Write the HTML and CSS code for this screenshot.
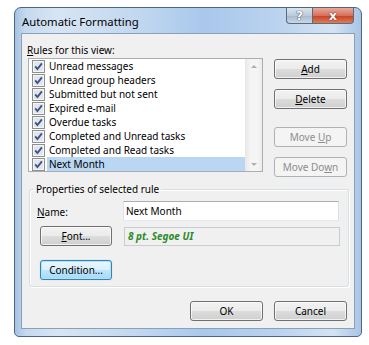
FILE: index.html
```html
<!DOCTYPE html>
<html lang="en">
<head>
    <meta charset="UTF-8">
    <title>Automatic Formatting</title>
    <link rel="stylesheet" href="styles.css">
</head>
<body>
    <svg width="0" height="0" class="defs">
        <symbol id="chk" viewBox="0 0 13 13">
            <rect x="0.5" y="0.5" width="12" height="12" fill="#f6f6f6" stroke="#8e8f8f"/>
            <rect x="2" y="2" width="9" height="9" fill="#e2e6eb"/>
            <path d="M3.2 6.4 L5.4 9 L9.9 3.4" stroke="#3c5588" stroke-width="1.9" fill="none"/>
        </symbol>
    </svg>
    <div class="window">
        <div class="titlebar">
            <span class="title">Automatic Formatting</span>
            <div class="caption-btns">
                <span class="cap-help">?</span>
                <span class="cap-close">x</span>
            </div>
        </div>
        <div class="client">
            <div class="rules">
                <div class="rules-left">
                    <div class="label"><u>R</u>ules for this view:</div>
                    <div class="listbox">
                        <div class="items">
                            <div class="item"><svg class="check"><use href="#chk"/></svg><span>Unread messages</span></div>
                            <div class="item"><svg class="check"><use href="#chk"/></svg><span>Unread group headers</span></div>
                            <div class="item"><svg class="check"><use href="#chk"/></svg><span>Submitted but not sent</span></div>
                            <div class="item"><svg class="check"><use href="#chk"/></svg><span>Expired e-mail</span></div>
                            <div class="item"><svg class="check"><use href="#chk"/></svg><span>Overdue tasks</span></div>
                            <div class="item"><svg class="check"><use href="#chk"/></svg><span>Completed and Unread tasks</span></div>
                            <div class="item"><svg class="check"><use href="#chk"/></svg><span>Completed and Read tasks</span></div>
                            <div class="item selected"><svg class="check"><use href="#chk"/></svg><span>Next Month</span></div>
                        </div>
                        <div class="scrollbar">
                            <span class="arrow up"></span>
                            <span class="arrow down"></span>
                        </div>
                    </div>
                </div>
                <div class="rules-btns">
                    <button class="btn"><u>A</u>dd</button>
                    <button class="btn"><u>D</u>elete</button>
                    <button class="btn disabled move-up">Move <u>U</u>p</button>
                    <button class="btn disabled">Move Do<u>w</u>n</button>
                </div>
            </div>
            <fieldset class="group">
                <legend>Properties of selected rule</legend>
                <div class="group-body">
                    <div class="prop-row">
                        <span class="prop-label"><u>N</u>ame:</span>
                        <div class="textbox">Next Month</div>
                    </div>
                    <div class="prop-row font-row">
                        <button class="btn small"><u>F</u>ont...</button>
                        <div class="font-preview">8 pt. Segoe UI</div>
                    </div>
                    <button class="btn small focused">Condition...</button>
                </div>
            </fieldset>
            <div class="footer">
                <button class="btn">OK</button>
                <button class="btn">Cancel</button>
            </div>
        </div>
    </div>
</body>
</html>
```

FILE: styles.css
```css
body {
    margin: 0;
    background: #fff;
    font-family: "Noto Sans", "Open Sans", sans-serif;
    font-size: 10px;
    color: #000;
}
.defs {
    position: absolute;
}
.window {
    margin: 7px 0 0 14px;
    width: 348px;
    height: 330px;
    box-sizing: border-box;
    border: 1px solid #4e6683;
    border-radius: 7px 7px 5px 5px;
    padding: 0 6px 7px 6px;
    background: linear-gradient(to right, #a6c2e2 0%, #c4d9ef 3%, #d7e5f3 12%, #c2d8ef 35%, #a9c8ec 55%, #bad2ee 75%, #d3e3f3 92%, #a9c4e4 100%);
}
.titlebar {
    height: 25px;
    display: flex;
    align-items: flex-start;
}
.title {
    margin: 6px 0 0 1px;
    font-size: 11.3px;
    line-height: 15px;
}
.caption-btns {
    margin-left: auto;
    margin-right: 1px;
    display: flex;
}
.cap-help, .cap-close {
    height: 16px;
    box-sizing: border-box;
    display: flex;
    align-items: center;
    justify-content: center;
    font-family: "DejaVu Sans", sans-serif;
    font-weight: bold;
    color: #fff;
    border: 1px solid #5d6b7d;
    border-top: none;
}
.cap-help {
    width: 26px;
    border-radius: 0 0 0 4px;
    border-right: none;
    background: linear-gradient(#dbe4ee, #bccadb 50%, #a6b8cc 51%, #c9d9ea);
    font-size: 12px;
    text-shadow: 0 0 1px #2c3c52, 0 0 1px #2c3c52;
}
.cap-close {
    width: 42px;
    border-radius: 0 0 4px 0;
    background: linear-gradient(#e9a99b, #d8705b 50%, #c74024 51%, #dd7c5d);
    font-size: 13px;
    text-shadow: 0 0 1px #5a1508, 0 0 1px #5a1508;
}
.client {
    height: 296px;
    box-sizing: border-box;
    background: #f0f0f0;
    border: 1px solid #8aa0b8;
    display: flex;
    flex-direction: column;
}
.rules {
    display: flex;
    padding: 9px 0 0 6px;
}
.rules-left {
    width: 235px;
}
.label {
    height: 15px;
    line-height: 15px;
    margin-left: -1px;
}
.listbox {
    height: 114px;
    box-sizing: border-box;
    border: 1px solid #abadb3;
    background: #fff;
    display: flex;
}
.items {
    flex: 1;
    padding-left: 3px;
}
.item {
    height: 14px;
    display: flex;
    align-items: center;
    line-height: 14px;
}
.item span {
    padding-left: 2px;
    flex: 1;
}
.item.selected span {
    background: #b9d6f3;
}
.check {
    width: 13px;
    height: 13px;
    margin-right: 2px;
}
.scrollbar {
    width: 17px;
    background: linear-gradient(to right, #eaeaea, #f5f5f5 30%, #f5f5f5 70%, #ececec);
    border-left: 1px solid #e8e8e8;
    display: flex;
    flex-direction: column;
    justify-content: space-between;
    align-items: center;
    padding: 6px 0 5px;
    box-sizing: border-box;
}
.arrow {
    width: 0;
    height: 0;
    border-left: 3px solid transparent;
    border-right: 3px solid transparent;
}
.arrow.up {
    border-bottom: 3px solid #b0b0b0;
}
.arrow.down {
    border-top: 3px solid #b0b0b0;
}
.rules-btns {
    margin-left: 11px;
    padding-top: 16px;
    display: flex;
    flex-direction: column;
    gap: 10px;
}
.btn {
    width: 73px;
    height: 20px;
    box-sizing: border-box;
    padding: 0;
    font-family: inherit;
    font-size: 10px;
    color: #000;
    border: 1px solid #707070;
    border-radius: 3px;
    background: linear-gradient(#f2f2f2, #ebebeb 49%, #dddddd 50%, #cfcfcf);
    box-shadow: inset 0 0 0 1px rgba(255, 255, 255, 0.7);
}
.btn.disabled {
    color: #8d8d8d;
    border-color: #adb2b5;
    background: #f4f4f4;
    box-shadow: none;
}
.btn.move-up {
    margin-top: 8px;
}
.btn.small {
    width: 72px;
}
.btn.focused {
    border-color: #3c7fb1;
    background: linear-gradient(#eaf6fd, #d9f0fc 49%, #bee6fd 50%, #a7d9f5);
    box-shadow: inset 0 0 0 1px #a9e4fb, 0 0 1px #7cc4ea;
}
.group {
    margin: 5px 7px 0 7px;
    padding: 0;
    border: 1px solid #d5dfe5;
    border-radius: 3px;
    box-shadow: inset 1px 1px 0 #fff, 1px 1px 0 #fff;
}
.group legend {
    margin-left: 4px;
    padding: 0 2px;
    line-height: 14px;
}
.group-body {
    padding: 5px 8px 6px 8px;
}
.prop-row {
    display: flex;
    align-items: center;
}
.prop-label {
    width: 86px;
    margin-left: -1px;
    padding-top: 2px;
}
.textbox {
    width: 216px;
    height: 20px;
    box-sizing: border-box;
    border: 1px solid #abadb3;
    border-color: #abadb3 #dbdfe6 #e3e9ef #e2e3ea;
    background: #fff;
    padding: 0 2px;
    line-height: 18px;
}
.font-row {
    margin: 5px 0 14px 2px;
    gap: 12px;
}
.font-preview {
    width: 216px;
    height: 19px;
    box-sizing: border-box;
    border: 1px solid #c9cdd2;
    background: #f0f0f0;
    padding: 0 3px;
    line-height: 17px;
    font-weight: bold;
    font-style: italic;
    color: #2c8a2a;
}
.group-body > .btn.focused {
    margin-left: 2px;
}
.footer {
    margin-top: 14px;
    padding-right: 7px;
    display: flex;
    justify-content: flex-end;
    gap: 11px;
}
```
